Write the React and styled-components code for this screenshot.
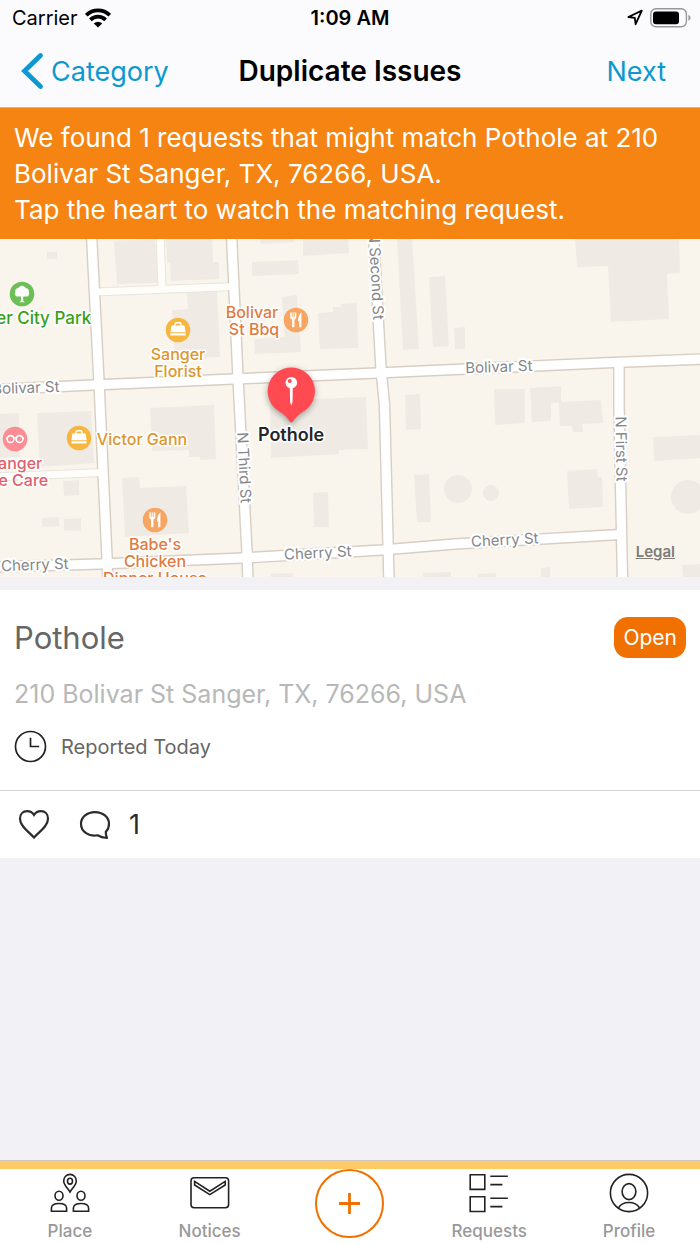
import React, { useState } from "react";
import styled, { createGlobalStyle } from 'styled-components';

// styles
const GlobalStyle = createGlobalStyle`
	* {
		box-sizing: border-box;
	}

	body {
		margin: 0;
		background: #f2f1f6;
		font-family: Inter, "Liberation Sans", sans-serif;
	}

	h1, h2, p {
		margin: 0;
		font-weight: 400;
	}

	button {
		padding: 0;
		border: 0;
		background: none;
		font-family: inherit;
		cursor: pointer;
	}

	a {
		text-decoration: none;
	}

	svg {
		display: block;
		flex-shrink: 0;
	}
`;

const Screen = styled.div`
	display: flex;
	flex-direction: column;
	min-height: 100vh;
`;

const Header = styled.header`
	background: #fbfbfd;
	border-bottom: 1px solid #c9b9a6;
`;

const Columns = styled.div`
	display: grid;
	grid-template-columns: 1fr auto 1fr;
	align-items: center;
`;

const StatusBar = styled(Columns)`
	height: 35px;
	padding: 0 9px;
	font-size: 20px;
	color: #000;
`;

const Side = styled.div`
	display: flex;
	align-items: center;
	justify-content: ${props => props.$end ? 'flex-end' : 'flex-start'};
	gap: 7px;
`;

const Carrier = styled.span`
	padding-left: 3px;
`;

const Time = styled.span`
	font-weight: 600;
`;

const NavBar = styled(Columns)`
	height: 72px;
	padding: 0 20px;
`;

const NavButton = styled.button`
	display: flex;
	align-items: center;
	gap: 7px;
	font-size: 27px;
	color: #0d99cf;
`;

const NextButton = styled(NavButton)`
	padding: 0 14px;
`;

const Title = styled.h1`
	font-size: 28px;
	font-weight: 600;
	color: #000;
`;

const Banner = styled.section`
	padding: 12px 14px 11px;
	background: #f58412;
	font-size: 26px;
	line-height: 36px;
	color: #fff;
`;

const Map = styled.section`
	position: relative;
	height: 338px;
	background: #f9f5ed;
	overflow: hidden;

	> svg {
		width: 100%;
		height: 100%;
	}
`;

const Legal = styled.a`
	position: absolute;
	right: 25px;
	bottom: 16px;
	font-size: 15px;
	font-weight: 600;
	color: #7f7c78;
	text-decoration: underline;
`;

const RoadName = styled.text`
	font-size: 15px;
	fill: #85868a;
	stroke: #fff;
	stroke-width: 4px;
	stroke-linejoin: round;
	paint-order: stroke;
`;

const PlaceName = styled.text`
	font-size: ${props => props.$size || 16}px;
	font-weight: ${props => props.$strong ? 600 : 500};
	fill: ${props => props.$color};
	stroke: #fff;
	stroke-width: 3px;
	stroke-linejoin: round;
	paint-order: stroke;
`;

const Card = styled.article`
	margin-top: 13px;
	background: #fff;
`;

const CardBody = styled.div`
	display: flex;
	flex-direction: column;
	gap: 16px;
	padding: 27px 14px;
	border-bottom: 1px solid #d2d2d4;
`;

const CardTop = styled.div`
	display: flex;
	align-items: center;
	justify-content: space-between;
`;

const CardTitle = styled.h2`
	font-size: 31px;
	color: #666;
`;

const Status = styled.span`
	padding: 0 9px;
	border-radius: 14px;
	background: #f07000;
	font-size: 21px;
	line-height: 41px;
	color: #fff;
`;

const Address = styled.p`
	padding-top: 4px;
	font-size: 25px;
	line-height: 32px;
	color: #b8b8b8;
`;

const Reported = styled.div`
	display: flex;
	align-items: center;
	gap: 14px;
	padding-top: 4px;
	font-size: 20px;
	color: #666;
`;

const Actions = styled.div`
	display: flex;
	align-items: center;
	gap: 29px;
	height: 67px;
	padding: 0 18px;
`;

const ActionButton = styled.button`
	display: flex;
	align-items: center;
	gap: 18px;
	font-size: 27px;
	color: #2b2b2b;
`;

const TabBar = styled.nav`
	display: grid;
	grid-template-columns: repeat(5, 1fr);
	height: 84px;
	margin-top: auto;
	padding-right: 1px;
	border-top: 1px solid #cfc8bf;
	background: linear-gradient(#ffcb66 8px, #fff 8px);
`;

const Tab = styled.a`
	display: flex;
	flex-direction: column;
	align-items: center;
	gap: 8px;
	padding-top: 12px;
	font-size: 17px;
	font-weight: 500;
	line-height: 20px;
	color: #999;
`;

const AddButton = styled.button`
	display: flex;
	align-items: center;
	justify-content: center;
	justify-self: center;
	width: 69px;
	height: 69px;
	margin-top: 8px;
	border: 2px solid #f07000;
	border-radius: 50%;
`;

// map data
const mainRoads = [
	'M91.5 -5 L99 143 L107 319 L108 343',
	'M231.5 -5 L238 139 L247 313 L248 343',
	'M373.5 -5 L381 130 L384.5 166 L388 303 L389 343',
	'M619 126 L619 166 L622.5 343',
	'M-5 150.5 L93 146 L233 140 L377 134 L455 130.5 L613 123.5 L705 120',
	'M-5 328 L100 325 L242 319 L382 311 L455 305 L620 295.5',
];

const sideRoads = [
	'M95 53 L234 47.5',
	'M160 -5 L162 49',
	'M-5 238 L103 233.5',
];

const buildings = [
	'47,13 57,13 57,20 47,20',
	'114,2 155,0 158,44 117,45',
	'166,0 212,0 213,23 219,23 219,40 171,42 170,24 167,24',
	'187,53 217,52 220,118 175,120 172,71 188,70',
	'150,169 214,166 216,220 200,221 200,218 189,218 189,211 152,212',
	'37,174 91,172 94,224 40,228',
	'0,175 19,174 20,218 0,219',
	'63,242 79,241 79,256 64,257',
	'42,279 59,278 59,287 42,288',
	'64,280 81,279 81,292 64,291',
	'122,239 139,238 140,249 186,247 189,294 125,298',
	'260,0 295,0 294,3 261,5',
	'303,0 348,0 349,14 303,17',
	'252,23 298,21 299,35 252,37',
	'282,58 297,56 301,113 255,115 254,100 285,98',
	'318,74 333,73 333,68 341,68 341,65 357,64 358,109 320,110',
	'397,0 412,0 419,110 403,111',
	'429,38 445,37 449,107 433,108',
	'454,89 465,88 465,110 455,110',
	'270,162 366,158 368,210 339,211 339,215 271,219',
	'405,156 420,155 421,190 406,191',
	'313,254 328,253 329,288 314,288',
	'414,236 429,235 431,283 417,283',
	'271,335 293,334 293,338 271,338',
	'423,334 451,333 451,338 423,338',
	'575,0 679,0 680,34 667,35 669,80 611,83 608,27 577,28',
	'494,150 525,150 525,184 495,186',
	'530,149 561,147 561,163 551,164 551,182 532,183',
	'559,163 601,161 603,184 582,185 583,193 573,193 572,187 560,187',
	'653,198 700,196 700,219 654,222',
	'567,232 597,230 598,238 602,238 603,268 569,270',
	'682,326 700,325 700,338 683,338',
	'541,329 550,328 550,338 541,338',
	'478,335 496,334 496,338 478,338',
];

const roadNames = [
	{ name: 'Bolivar St', x: 26, y: 154, angle: -2 },
	{ name: 'Bolivar St', x: 499, y: 133, angle: -2 },
	{ name: 'Cherry St', x: 35, y: 331, angle: -2 },
	{ name: 'Cherry St', x: 318, y: 319, angle: -3 },
	{ name: 'Cherry St', x: 505, y: 306, angle: -3 },
	{ name: 'N Second St', x: 371, y: 37, angle: 87 },
	{ name: 'N Third St', x: 239, y: 229, angle: 87 },
	{ name: 'N First St', x: 616, y: 210, angle: 89 },
];

const places = [
	{ icon: 'tree', x: 22, y: 55, fill: '#6cbf56', color: '#37a01a', size: 17, labels: [['Sanger City Park', 23, 85]] },
	{ icon: 'bag', x: 178, y: 91, fill: '#f7b63f', color: '#dc962a', labels: [['Sanger', 178, 121], ['Florist', 178, 138]] },
	{ icon: 'bag', x: 79, y: 199, fill: '#f7b63f', color: '#dc962a', labels: [['Victor Gann', 142, 206]] },
	{ icon: 'fork', x: 296, y: 81, fill: '#f7a562', color: '#e07b40', labels: [['Bolivar', 252, 79], ['St Bbq', 254, 96]] },
	{ icon: 'fork', x: 155, y: 281, fill: '#f7a562', color: '#e07b40', labels: [["Babe's", 155, 311], ['Chicken', 155, 328], ['Dinner House', 155, 345]] },
	{ icon: 'glasses', x: 15, y: 200, fill: '#fd8c94', color: '#e0606b', labels: [['Sanger', 15, 230], ['Eye Care', 14, 247]] },
];

const glyphs = {
	tree: (
		<path
			d="M-1 7 L-3 8.2 H3 L1.2 7 V2.5 H4.5 A3 3 0 0 0 6.8 -2 A3.6 3.6 0 0 0 3.8 -6 A4.4 4.4 0 0 0 -3.8 -6 A3.6 3.6 0 0 0 -6.8 -2 A3 3 0 0 0 -4.5 2.5 H-1 Z"
			fill="#fff"
		/>
	),
	bag: (
		<g>
			<path d="M-3 -4 V-5.5 Q-3 -7.2 -1.5 -7.2 H1.5 Q3 -7.2 3 -5.5 V-4" fill="none" stroke="#fff" strokeWidth="1.4" />
			<path d="M-6.5 -4.4 H6.5 L7.6 2.2 H-7.6 Z M-7.6 3.2 H7.6 V5.6 H-7.6 Z" fill="#fff" />
		</g>
	),
	fork: (
		<g>
			<path d="M-5.8 -7.4 V-3 Q-5.8 -.8 -3.9 -.4 V7.2 H-1.6 V-.4 Q.3 -.8 .3 -3 V-7.4" fill="#fff" />
			<path d="M-3.8 -7.6 V-3 M-1.7 -7.6 V-3" stroke="#f7a562" strokeWidth=".9" />
			<path d="M5.4 -7.8 Q2 -4.5 2 1.2 L3.2 1.6 V7.2 H5.4 Z" fill="#fff" />
		</g>
	),
	glasses: (
		<g fill="none" stroke="#fff" strokeWidth="1.6">
			<circle cx="-4.5" cy="0" r="3.4" />
			<circle cx="4.5" cy="0" r="3.4" />
			<path d="M-1.3 -.8 Q0 -1.8 1.3 -.8 M-9 -1 L-7.6 -.6 M9 -1 L7.6 -.6" />
		</g>
	),
};

//Components
const MapView = () => (
	<Map aria-label="Map">
		<svg viewBox="0 0 700 338" preserveAspectRatio="xMidYMid slice">
			<g fill="#efebe4">
				{buildings.map(points => <polygon key={points} points={points} />)}
				<circle cx="458" cy="250" r="14" />
				<circle cx="491" cy="254" r="8" />
				<circle cx="688" cy="258" r="17" />
			</g>
			<g fill="none">
				{sideRoads.map(d => <path key={d} d={d} stroke="#e9e5dc" strokeWidth="9" />)}
				{mainRoads.map(d => <path key={d} d={d} stroke="#d8cec3" strokeWidth="12" />)}
				{sideRoads.map(d => <path key={d} d={d} stroke="#fffdf9" strokeWidth="7" />)}
				{mainRoads.map(d => <path key={d} d={d} stroke="#fff" strokeWidth="9.2" />)}
			</g>
			{roadNames.map(({ name, x, y, angle }) => (
				<RoadName key={`${x}-${y}`} textAnchor="middle" transform={`translate(${x} ${y}) rotate(${angle})`}>
					{name}
				</RoadName>
			))}
			{places.map(place => (
				<g key={`${place.x}-${place.y}`}>
					<g transform={`translate(${place.x} ${place.y})`}>
						<circle r="12.3" fill={place.fill} />
						{glyphs[place.icon]}
					</g>
					{place.labels.map(([label, x, y]) => (
						<PlaceName key={label} x={x} y={y} textAnchor="middle" $color={place.color} $size={place.size}>
							{label}
						</PlaceName>
					))}
				</g>
			))}
			<g filter="drop-shadow(0 2px 3px rgba(0, 0, 0, .35))">
				<path
					d="M291.3 128.5 A23.6 23.6 0 0 1 304 172 Q296.5 176.5 293 182.5 Q291.3 184.5 289.6 182.5 Q286 176.5 278.6 172 A23.6 23.6 0 0 1 291.3 128.5 Z"
					fill="#ff4a51"
				/>
			</g>
			<circle cx="291.3" cy="143.7" r="5.8" fill="#fff" />
			<circle cx="289.8" cy="141.9" r="2" fill="#ff4a51" />
			<path d="M289.8 148 H292.8 L292.5 163 L291.3 166.5 L290.1 163 Z" fill="#fff" />
			<PlaceName x="291" y="202" textAnchor="middle" $color="#252527" $size={18} $strong>Pothole</PlaceName>
		</svg>
		<Legal href="#legal">Legal</Legal>
	</Map>
);

const tabs = [
	{
		name: 'Place',
		icon: (
			<>
				<path d="M20 19 C18 15.5 13.7 12 13.7 7.9 A6.3 6.5 0 0 1 26.3 7.9 C26.3 12 22 15.5 20 19 Z" />
				<ellipse cx="20" cy="8.2" rx="2.5" ry="2.9" />
				<ellipse cx="9" cy="22.7" rx="4" ry="4.5" />
				<ellipse cx="31" cy="22.7" rx="4" ry="4.5" />
				<path d="M1.4 38.3 V35 C1.6 32 4.8 30.5 9 30.5 S16.4 32 16.6 35 V38.3 Z" />
				<path d="M23.4 38.3 V35 C23.6 32 26.8 30.5 31 30.5 S38.4 32 38.6 35 V38.3 Z" />
			</>
		),
	},
	{
		name: 'Notices',
		icon: (
			<>
				<rect x="1" y="4.8" width="37.6" height="30" rx="3.2" />
				<path d="M4.6 8.4 L19.8 18.2 L35.2 8.4 V12 L19.8 21.6 L4.6 12 Z" />
			</>
		),
	},
	{ name: 'add' },
	{
		name: 'Requests',
		icon: (
			<>
				<path d="M1.2 1.7 H15.8 V16.4 H1.2 Z M1.2 23.8 H15.8 V38.5 H1.2 Z" />
				<path d="M21.3 3.3 H38.8 M21.3 11.6 H33.4 M21.3 25.2 H38.8 M21.3 33.6 H33.4" />
			</>
		),
	},
	{
		name: 'Profile',
		icon: (
			<>
				<circle cx="20" cy="20" r="18.6" />
				<ellipse cx="20" cy="18.6" rx="6.9" ry="8" />
				<path d="M9.4 35 C12 30.5 15.5 29.5 20 29.5 S28 30.5 30.6 35" />
			</>
		),
	},
];

const App = () => {
	const [liked, setLiked] = useState(false);

	const handleLike = () => {
		setLiked(!liked);
	}

	return (
		<Screen>
			<GlobalStyle />
			<Header>
				<StatusBar>
					<Side>
						<Carrier>Carrier</Carrier>
						<svg width="26" height="20" viewBox="0 0 26 20">
							<g fill="none" stroke="#000" strokeWidth="3.8">
								<path d="M1.3 7.2 A16.6 16.6 0 0 1 24.7 7.2" />
								<path d="M5.4 11.8 A10.9 10.9 0 0 1 20.6 11.8" />
							</g>
							<path d="M8.8 15.4 A6 6 0 0 1 17.2 15.4 L13 19.4 Z" />
						</svg>
					</Side>
					<Time>1:09 AM</Time>
					<Side $end>
						<svg width="16" height="17" viewBox="0 0 16 17">
							<path d="M1.4 8 L14.8 1.6 L8.6 15.2 L7.8 8.8 Z" fill="none" stroke="#000" strokeWidth="1.8" strokeLinejoin="round" />
						</svg>
						<svg width="41" height="20" viewBox="0 0 41 20">
							<rect x=".8" y=".8" width="35.6" height="18" rx="5" fill="none" stroke="#98989a" strokeWidth="1.4" />
							<rect x="3" y="3.4" width="26" height="12.8" rx="3" />
							<path d="M38.4 6.8 Q40.6 7.8 40.6 9.8 T38.4 12.8 Z" fill="#98989a" />
						</svg>
					</Side>
				</StatusBar>
				<NavBar>
					<Side>
						<NavButton>
							<svg width="24" height="38" viewBox="0 0 24 38">
								<path d="M20.5 3.5 L4.5 19 L20.5 34.5" fill="none" stroke="#0d99cf" strokeWidth="4.8" strokeLinecap="round" strokeLinejoin="miter" />
							</svg>
							Category
						</NavButton>
					</Side>
					<Title>Duplicate Issues</Title>
					<Side $end>
						<NextButton>Next</NextButton>
					</Side>
				</NavBar>
			</Header>
			<Banner>
				<p>We found 1 requests that might match Pothole at 210 Bolivar St Sanger, TX, 76266, USA.</p>
				<p>Tap the heart to watch the matching request.</p>
			</Banner>
			<MapView />
			<Card>
				<CardBody>
					<CardTop>
						<CardTitle>Pothole</CardTitle>
						<Status>Open</Status>
					</CardTop>
					<Address>210 Bolivar St Sanger, TX, 76266, USA</Address>
					<Reported>
						<svg width="33" height="33" viewBox="0 0 33 33" fill="none" stroke="#222" strokeWidth="1.7">
							<circle cx="16.5" cy="16.5" r="15" />
							<path d="M16.5 7.8 V16.5 H25.2" />
						</svg>
						<span>Reported Today</span>
					</Reported>
				</CardBody>
				<Actions>
					<ActionButton aria-label="Like" aria-pressed={liked} onClick={handleLike}>
						<svg width="32" height="30" viewBox="0 0 32 30">
							<path
								d="M16 27.6 C12 22.7 2 16.8 2 8.7 C2 4.2 5 1.2 9 1.2 C12.2 1.2 14.6 2.8 16 5 C17.4 2.8 19.8 1.2 23 1.2 C27 1.2 30 4.2 30 8.7 C30 16.8 20 22.7 16 27.6 Z"
								fill={liked ? '#2b2b2b' : 'none'}
								stroke="#2b2b2b"
								strokeWidth="2.2"
							/>
						</svg>
					</ActionButton>
					<ActionButton aria-label="Comments">
						<svg width="32" height="30" viewBox="0 0 32 30">
							<path
								d="M18.6 25.3 C10 27.2 2 21.5 2 14 C2 7 8.3 2.2 16 2.2 S30 7 30 14 C30 17.2 28.8 19.8 26.8 21.8 Q26.6 25 28 28 C24.5 27.7 21.5 27 18.6 25.3 Z"
								fill="none"
								stroke="#2b2b2b"
								strokeWidth="2.2"
								strokeLinejoin="round"
							/>
						</svg>
						1
					</ActionButton>
				</Actions>
			</Card>
			<TabBar>
				{tabs.map(({ name, icon }) => icon ? (
					<Tab key={name} href={`#${name.toLowerCase()}`}>
						<svg width="40" height="40" viewBox="0 0 40 40" fill="none" stroke="#222" strokeWidth="1.6">
							{icon}
						</svg>
						{name}
					</Tab>
				) : (
					<AddButton key={name} aria-label="Add request">
						<svg width="21" height="21" viewBox="0 0 21 21" stroke="#f07000" strokeWidth="2.8">
							<path d="M10.5 0 V21 M0 10.5 H21" />
						</svg>
					</AddButton>
				))}
			</TabBar>
		</Screen>
	)
}

export default App;
